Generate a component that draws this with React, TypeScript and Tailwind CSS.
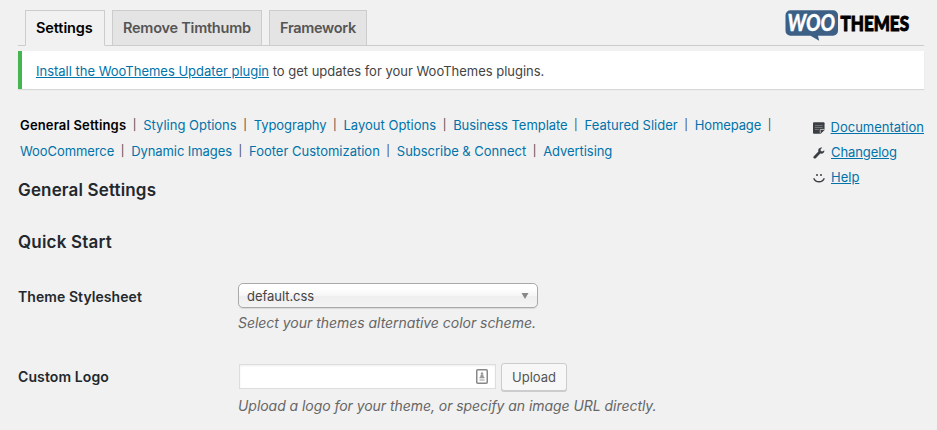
const tabs = [
  { label: 'Settings', style: 'w-[80px] h-[36px] bg-[#f1f1f1] text-black border-b-[#f1f1f1] tracking-[-0.1px]' },
  { label: 'Remove Timthumb', style: 'w-[150px] h-[36px] bg-[#e4e4e4] text-[#555] tracking-[-0.24px]' },
  { label: 'Framework', style: 'w-[98px] h-[36px] bg-[#e4e4e4] text-[#555] tracking-[-0.3px]' },
];

type Item = { label: string; style: string };

const firstRow: Item[] = [
  { label: 'General Settings', style: 'font-semibold text-black tracking-[0.15px]' },
  { label: 'Styling Options', style: 'text-[#0073aa]' },
  { label: 'Typography', style: 'text-[#0073aa] tracking-[-0.08px]' },
  { label: 'Layout Options', style: 'text-[#0073aa] tracking-[0.01px]' },
  { label: 'Business Template', style: 'text-[#0073aa] tracking-[-0.05px]' },
  { label: 'Featured Slider', style: 'text-[#0073aa]' },
  { label: 'Homepage', style: 'text-[#0073aa] tracking-[-0.1px]' },
];

const secondRow: Item[] = [
  { label: 'WooCommerce', style: 'text-[#0073aa] tracking-[-0.08px]' },
  { label: 'Dynamic Images', style: 'text-[#0073aa] tracking-[-0.08px]' },
  { label: 'Footer Customization', style: 'text-[#0073aa]' },
  { label: 'Subscribe & Connect', style: 'text-[#0073aa] tracking-[-0.02px]' },
  { label: 'Advertising', style: 'text-[#0073aa] tracking-[-0.06px]' },
];

function Logo() {
  return (
    <svg width="130" height="34" viewBox="0 0 130 34" className="ml-auto mr-[9px] mt-[9px] shrink-0 overflow-visible" aria-label="WooThemes">
      <path d="M5.500 1.200h42.500a5 5 0 0 1 5 5v15.500a5 5 0 0 1-5 5H33l1.200 5-8.700-5h-20a5 5 0 0 1-5-5v-15.500a5 5 0 0 1 5-5Z" fill="#3c5f85" />
      <text x="2.500" y="22" textLength="47.500" lengthAdjust="spacingAndGlyphs" fontFamily="Lato, sans-serif" fontWeight="900" fontStyle="italic" fontSize="22.500" fill="#fff" stroke="#fff" strokeWidth=".3">WOO</text>
      <text x="55.500" y="22" textLength="68.500" lengthAdjust="spacingAndGlyphs" fontFamily="Lato, sans-serif" fontWeight="900" fontSize="20.500" fill="#000" stroke="#000" strokeWidth="1">THEMES</text>
    </svg>
  );
}

function NoteIcon() {
  return (
    <svg width="12" height="12" viewBox="0 0 12 12">
      <path d="M1 0h10a1 1 0 0 1 1 1v7l-4 4H1a1 1 0 0 1-1-1V1a1 1 0 0 1 1-1Z" fill="#3b3f43" />
      <path d="M2 3.500h8M2 5.500h8M2 7.500h4" stroke="#85888b" strokeWidth=".8" />
      <path d="M7.500 11.500v-4H12" fill="none" stroke="#ddd" strokeWidth=".8" />
    </svg>
  );
}

function WrenchIcon() {
  return (
    <svg width="12" height="12" viewBox="0 0 12 12">
      <path d="M11.300 3.200 9.400 4.500 7.800 3.900l-.2-1.700L9.400.6C7.600 0 5.800 1 5.300 2.700c-.2.700-.1 1.300.1 1.900L.8 9.200c-.6.600-.6 1.400 0 2s1.400.5 2 0l4.500-4.600c2 .7 4.500-.9 4-3.400Z" fill="#3b3f43" />
    </svg>
  );
}

function SmileIcon() {
  return (
    <svg width="12" height="12" viewBox="0 0 12 12">
      <circle cx="4" cy="3" r="1" fill="#3b3f43" />
      <circle cx="8" cy="3" r="1" fill="#3b3f43" />
      <path d="M.7 6.200C2.500 10.900 9.500 10.900 11.300 6.200" fill="none" stroke="#3b3f43" strokeWidth="1.300" />
    </svg>
  );
}

const help = [
  { label: 'Documentation', icon: <NoteIcon />, style: '' },
  { label: 'Changelog', icon: <WrenchIcon />, style: 'tracking-[-0.08px]' },
  { label: 'Help', icon: <SmileIcon />, style: '' },
];

function Links({ items, trailing }: { items: Item[]; trailing?: boolean }) {
  return (
    <div className="flex whitespace-nowrap">
      {items.map((item, i) => (
        <span key={item.label} className="flex">
          <a className={item.style}>{item.label}</a>
          {(trailing || i < items.length - 1) && <span className="w-[17px] pl-[6.5px] text-[11px] text-[#444]">|</span>}
        </span>
      ))}
    </div>
  );
}

export default function App() {
  return (
    <div className="flex h-[430px] w-[937px] flex-col overflow-hidden bg-[#f1f1f1] pl-[18px] pr-[13px] font-['Inter','Liberation_Sans',sans-serif] text-[13px] text-[#444]">
      <header className="flex h-[46px] shrink-0 border-b border-[#ccc] pl-[7px]">
        <nav className="flex h-[46px] gap-[7px] pt-[10px]">
          {tabs.map((t) => (
            <a key={t.label} className={'shrink-0 whitespace-nowrap border border-[#ccc] pl-[10px] text-[14.5px] font-semibold leading-[34px] ' + t.style}>
              {t.label}
            </a>
          ))}
        </nav>
        <Logo />
      </header>

      <div className="mt-[5px] h-[38px] shrink-0 border-l-4 border-[#46b450] bg-white pl-[14px] leading-[40px] tracking-[-0.01px] shadow-[0_1px_1px_0_rgba(0,0,0,0.1)]">
        <a className="text-[#0073aa] underline">Install the WooThemes Updater plugin</a> to get updates for your WooThemes plugins.
      </div>

      <div className="flex h-[87px] shrink-0 justify-between">
        <div className="pl-[2px] pt-[23px] leading-[26px]">
          <Links items={firstRow} trailing />
          <Links items={secondRow} />
        </div>
        <ul className="w-[111px] pt-[26px]">
          {help.map((h) => (
            <li key={h.label} className="flex h-[25px] items-center gap-[6px]">
              {h.icon}
              <a className={'text-[#0073aa] underline ' + h.style}>{h.label}</a>
            </li>
          ))}
        </ul>
      </div>

      <h2 className="h-[52px] shrink-0 text-[17px] font-semibold leading-[28px] tracking-[0.15px] text-[#23282d]">General Settings</h2>
      <h2 className="h-[55px] shrink-0 text-[17px] font-semibold leading-[28px] tracking-[0.2px] text-[#23282d]">Quick Start</h2>

      <div className="flex h-[80px] shrink-0">
        <h3 className="w-[220px] text-[14px] font-semibold leading-[28px] tracking-[0.07px] text-[#23282d]">Theme Stylesheet</h3>
        <div>
          <div className="flex h-[25px] w-[300px] items-center justify-between rounded-[5px] border border-[#aaa] bg-[linear-gradient(to_bottom,#fff_20%,#f6f6f6_50%,#eee_52%,#f4f4f4_100%)] pl-[8px] pr-[8px] shadow-[0_1px_1px_rgba(0,0,0,0.1)]">
            <span className="pt-[2px] tracking-[-0.05px]">default.css</span>
            <svg width="8" height="6" viewBox="0 0 8 6"><path d="M.5 0h7L4 6Z" fill="#888" /></svg>
          </div>
          <p className="pt-[6px] text-[14px] italic leading-[18px] tracking-[-0.03px] text-[#666]">Select your themes alternative color scheme.</p>
        </div>
      </div>

      <div className="flex h-[67px] shrink-0">
        <h3 className="w-[220px] text-[14px] font-semibold leading-[28px] tracking-[0.1px] text-[#23282d]">Custom Logo</h3>
        <div>
          <div className="flex h-[28px] items-start">
            <div className="ml-[1px] mt-[1px] flex h-[25px] w-[257px] items-center justify-end border border-[#ddd] bg-white pr-[7px] shadow-[inset_0_1px_2px_rgba(0,0,0,0.07)]">
              <svg width="12" height="15" viewBox="0 0 12 15">
                <rect x=".75" y=".75" width="10.500" height="13.500" rx="1" fill="#fff" stroke="#888" strokeWidth="1.500" />
                <circle cx="6" cy="4.500" r="1.200" fill="#999" />
                <path d="M4.800 5.500h2.400L8 8.500H4ZM3.500 8h5v1.300h-5ZM3.500 10.500h5v1h-5Z" fill="#999" />
              </svg>
            </div>
            <button className="ml-[5px] h-[28px] w-[66px] rounded-[3px] border border-[#ccc] bg-[#f7f7f7] pt-[2px] text-[#555] shadow-[0_1px_0_#ccc]">Upload</button>
          </div>
          <p className="pt-[6px] text-[14px] italic leading-[18px] tracking-[-0.05px] text-[#666]">Upload a logo for your theme, or specify an image URL directly.</p>
        </div>
      </div>
    </div>
  );
}
